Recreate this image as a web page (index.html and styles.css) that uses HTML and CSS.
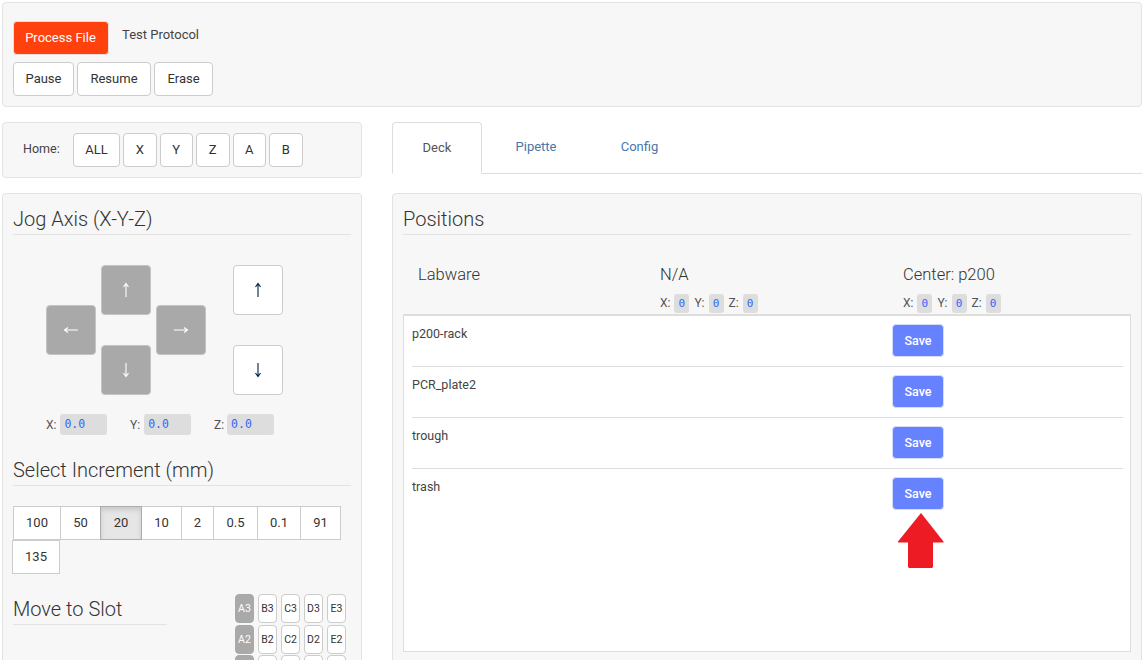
FILE: index.html
```html
<!DOCTYPE html>
<html lang="en">
<head>
  <meta charset="UTF-8">
  <title>Protocol Calibration</title>
  <meta name="viewport" content="width=device-width, initial-scale=1.0">
  <link rel="stylesheet" href="styles.css">
</head>
<body>

  <div class="well top-well">
    <div class="file-row">
      <button class="btn btn-run">Process File</button>
      <span class="file-name">Test Protocol</span>
    </div>
    <div class="btn-row">
      <button class="btn">Pause</button>
      <button class="btn">Resume</button>
      <button class="btn">Erase</button>
    </div>
  </div>

  <div class="columns">
    <div class="left-col">
      <div class="well home-well">
        <span class="home-label">Home:</span>
        <button class="btn home-all">ALL</button>
        <button class="btn home-axis">X</button>
        <button class="btn home-axis">Y</button>
        <button class="btn home-axis">Z</button>
        <button class="btn home-axis">A</button>
        <button class="btn home-axis">B</button>
      </div>

      <div class="well jog-well">
        <h3 class="section-title">Jog Axis (X-Y-Z)</h3>

        <div class="jog-grid">
          <button class="jog jog-dark jog-y-up"><svg width="16" height="16" viewBox="0 0 16 16"><path d="M8 1.500V15M5.500 5 8 1.500 10.500 5"/></svg></button>
          <button class="jog jog-dark jog-x-left"><svg width="16" height="16" viewBox="0 0 16 16"><path d="M1.500 8H15M5 5.500 1.500 8 5 10.500"/></svg></button>
          <button class="jog jog-dark jog-x-right"><svg width="16" height="16" viewBox="0 0 16 16"><path d="M1 8H14.500M11 5.500 14.500 8 11 10.500"/></svg></button>
          <button class="jog jog-dark jog-y-down"><svg width="16" height="16" viewBox="0 0 16 16"><path d="M8 1V14.500M5.500 11 8 14.500 10.500 11"/></svg></button>
          <button class="jog jog-z-up"><svg width="16" height="16" viewBox="0 0 16 16"><path d="M8 1.500V15M5.500 5 8 1.500 10.500 5"/></svg></button>
          <button class="jog jog-z-down"><svg width="16" height="16" viewBox="0 0 16 16"><path d="M8 1V14.500M5.500 11 8 14.500 10.500 11"/></svg></button>
        </div>

        <div class="readout">
          <span class="axis">X: <code class="val">0.0</code></span>
          <span class="axis">Y: <code class="val">0.0</code></span>
          <span class="axis">Z: <code class="val">0.0</code></span>
        </div>

        <h3 class="section-title incr-title">Select Increment (mm)</h3>
        <div class="incr-group">
          <button class="incr w47">100</button>
          <button class="incr w40">50</button>
          <button class="incr w41 active">20</button>
          <button class="incr w40">10</button>
          <button class="incr w32">2</button>
          <button class="incr w44">0.5</button>
          <button class="incr w43">0.1</button>
          <button class="incr w40">91</button>
          <button class="incr w48 wrapped">135</button>
        </div>

        <div class="slot-area">
          <h3 class="section-title slot-title">Move to Slot</h3>
          <div class="slot-grid">
            <button class="slot slot-dark">A3</button>
            <button class="slot">B3</button>
            <button class="slot">C3</button>
            <button class="slot">D3</button>
            <button class="slot">E3</button>
            <button class="slot slot-dark">A2</button>
            <button class="slot">B2</button>
            <button class="slot">C2</button>
            <button class="slot">D2</button>
            <button class="slot">E2</button>
            <button class="slot slot-dark">A1</button>
            <button class="slot">B1</button>
            <button class="slot">C1</button>
            <button class="slot">D1</button>
            <button class="slot">E1</button>
          </div>
        </div>
      </div>
    </div>

    <div class="right-col">
      <ul class="tabs">
        <li class="tab active">Deck</li>
        <li class="tab tab-pipette">Pipette</li>
        <li class="tab tab-config">Config</li>
      </ul>

      <div class="well positions-well">
        <h3 class="section-title">Positions</h3>

        <div class="pos-head">
          <div class="pos-col pos-labware"><span class="pos-name">Labware</span></div>
          <div class="pos-col pos-na">
            <span class="pos-name">N/A</span>
            <div class="pos-coords">
              <span>X: <code class="val-sm">0</code></span>
              <span>Y: <code class="val-sm">0</code></span>
              <span>Z: <code class="val-sm">0</code></span>
            </div>
          </div>
          <div class="pos-col pos-center">
            <span class="pos-name">Center: p200</span>
            <div class="pos-coords">
              <span>X: <code class="val-sm">0</code></span>
              <span>Y: <code class="val-sm">0</code></span>
              <span>Z: <code class="val-sm">0</code></span>
            </div>
          </div>
        </div>

        <div class="pos-box">
          <div class="pos-row">
            <span class="pos-label">p200-rack</span>
            <button class="btn-save">Save</button>
          </div>
          <div class="pos-row">
            <span class="pos-label">PCR_plate2</span>
            <button class="btn-save">Save</button>
          </div>
          <div class="pos-row">
            <span class="pos-label">trough</span>
            <button class="btn-save">Save</button>
          </div>
          <div class="pos-row pos-last">
            <span class="pos-label">trash</span>
            <button class="btn-save">Save</button>
          </div>
          <svg class="red-arrow" width="46" height="55" viewBox="0 0 46 55">
            <path d="M23 0 L45.500 28.500 L45.500 29.500 L35 29.500 L35 54 L34 55 L11 55 L10 54 L10 29.500 L0 29.500 L0 28.500 Z" fill="#ed1c24"/>
          </svg>
        </div>
      </div>
    </div>
  </div>

</body>
</html>
```

FILE: styles.css
```css
* {
  box-sizing: border-box;
}
html, body {
  height: 660px;
  overflow: hidden;
}
body {
  margin: 0;
  padding: 2px 5px 0 2px;
  background-color: #fff;
  color: #333;
  font-family: Roboto, "Liberation Sans", sans-serif;
  font-size: 13px;
}
button {
  font-family: inherit;
  margin: 0;
}
.well {
  background-color: #f7f7f7;
  border: 1px solid #e3e3e3;
  border-radius: 4px;
}
.btn {
  height: 34px;
  padding: 0 12px 2px;
  background-color: #fff;
  border: 1px solid #ccc;
  border-radius: 4px;
  color: #333;
  font-size: 13px;
}
.btn-run {
  width: 96px;
  padding: 0 1px 2px 0;
  background-color: #ff410e;
  border-color: #e6e0dc;
  color: #fff;
}

/* top bar */
.top-well {
  height: 105px;
  padding: 18px 10px 0;
}
.file-row {
  display: flex;
  height: 41px;
}
.file-name {
  margin-left: 13px;
  padding-top: 6px;
  color: #444;
}
.btn-row {
  display: flex;
  gap: 3px;
}
.btn-row .btn {
  padding: 0 0 2px;
}
.btn-row .btn:nth-child(1) { width: 61px; }
.btn-row .btn:nth-child(2) { width: 74px; }
.btn-row .btn:nth-child(3) { width: 59px; }

/* columns */
.columns {
  display: flex;
  gap: 30px;
  margin-top: 15px;
}
.left-col {
  width: 360px;
  flex: none;
}
.right-col {
  flex: 1;
  min-width: 0;
}

/* home */
.home-well {
  display: flex;
  align-items: center;
  height: 56px;
  padding-left: 20px;
}
.home-label {
  width: 50px;
  padding-bottom: 4px;
  color: #444;
  font-size: 12.500px;
}
.home-well .btn {
  padding: 0 0 2px;
  margin-right: 3px;
}
.home-all { width: 47px; }
.home-well .home-axis { width: 33.500px; }

/* jog */
.jog-well {
  height: 520px;
  margin-top: 15px;
  padding: 0 10px;
}
.section-title {
  margin: 0;
  padding-top: 13px;
  height: 41px;
  border-bottom: 1px solid #e3e3e3;
  color: #333;
  font-size: 20px;
  font-weight: 300;
  line-height: 24px;
}
.jog-grid {
  display: grid;
  grid-template-columns: 50px 5px 50px 5px 50px 27px 50px;
  grid-template-rows: 40px 10px 30px 10px 40px;
  margin: 30px 0 0 33px;
}
.jog {
  display: flex;
  align-items: center;
  justify-content: center;
  padding: 0;
  background-color: #fff;
  border: 1px solid #ccc;
  border-radius: 4px;
}
.jog svg {
  fill: none;
  stroke: #024;
  stroke-width: 1.100;
}
.jog-dark {
  background-color: #a9a9a9;
  border-color: #c4c4c4;
}
.jog-dark svg {
  stroke: #fff;
}
.jog-y-up { grid-column: 3; grid-row: 1 / 3; }
.jog-x-left { grid-column: 1; grid-row: 2 / 5; }
.jog-x-right { grid-column: 5; grid-row: 2 / 5; }
.jog-y-down { grid-column: 3; grid-row: 4 / 6; }
.jog-z-up { grid-column: 7; grid-row: 1 / 3; }
.jog-z-down { grid-column: 7; grid-row: 4 / 6; }

.readout {
  display: flex;
  margin: 19px 0 0 33px;
  color: #555;
  font-size: 12px;
}
.axis {
  width: 84px;
  display: flex;
  align-items: center;
  gap: 4px;
}
.axis:last-child {
  gap: 3px;
}
.val {
  display: block;
  width: 47px;
  height: 21px;
  padding-left: 4px;
  background-color: #ddd;
  border-radius: 3px;
  color: #36f;
  font-family: "DejaVu Sans Mono", monospace;
  font-size: 11.500px;
  line-height: 21px;
}
.incr-title {
  margin-top: 10px;
}
.incr-group {
  display: flex;
  flex-wrap: wrap;
  margin-top: 20px;
}
.incr {
  height: 34px;
  padding: 0 0 2px;
  background-color: #fff;
  border: 1px solid #ccc;
  margin-right: -1px;
  color: #333;
  font-size: 13px;
}
.incr.active {
  background-color: #e6e6e6;
  border-color: #adadad;
  box-shadow: inset 0 3px 5px rgba(0, 0, 0, .125);
  position: relative;
}
.w32 { width: 33px; }
.w40 { width: 41px; }
.w41 { width: 42px; }
.w43 { width: 44px; }
.w44 { width: 45px; }
.w47 { width: 48px; }
.w48 { width: 48px; }
.wrapped {
  margin: 0 0 0 -1px;
}

.slot-area {
  display: flex;
  margin-top: 20px;
}
.slot-title {
  width: 154px;
  height: 31px;
  margin-top: 0;
  padding-top: 3px;
}
.slot-grid {
  display: grid;
  grid-template-columns: repeat(5, 19px);
  grid-auto-rows: 29px;
  column-gap: 4px;
  row-gap: 1.500px;
  margin-left: 68px;
}
.slot {
  padding: 0;
  background-color: #fff;
  border: 1px solid #ccc;
  border-radius: 4px;
  color: #333;
  font-size: 10.500px;
}
.slot-dark {
  background-color: #a9a9a9;
  border-color: #a9a9a9;
  color: #fff;
}

/* tabs */
.tabs {
  display: flex;
  height: 52px;
  margin: 0;
  padding: 0;
  list-style: none;
  border-bottom: 1px solid #ddd;
}
.tab {
  width: 90px;
  height: 52px;
  padding-top: 17px;
  text-align: center;
  color: #4a76a8;
}
.tab.active {
  border: 1px solid #ddd;
  border-bottom-color: #fff;
  border-radius: 4px 4px 0 0;
  color: #555;
}
.tab-pipette { width: 108px; }
.tab-config { width: 99px; }

/* positions */
.positions-well {
  height: 520px;
  margin-top: 19px;
  padding: 0 10px;
}
.pos-head {
  display: flex;
  height: 79px;
  padding-top: 30px;
}
.pos-col {
  display: flex;
  flex-direction: column;
}
.pos-labware { width: 257px; padding-left: 15px; }
.pos-na { width: 243px; }
.pos-name {
  height: 21px;
  color: #333;
  font-size: 16.500px;
  font-weight: 300;
  line-height: 20px;
}
.pos-coords {
  display: flex;
  gap: 5px;
  margin-top: 8px;
  color: #555;
  font-size: 12px;
}
.val-sm {
  display: inline-block;
  width: 15px;
  height: 19px;
  margin-left: 1px;
  background-color: #ddd;
  border-radius: 3px;
  color: #36f;
  font-family: "DejaVu Sans Mono", monospace;
  font-size: 11px;
  line-height: 19px;
  text-align: center;
}
.pos-box {
  position: relative;
  height: 338px;
  padding: 0 7px 0 8px;
  background-color: #fff;
  border: 1px solid #ddd;
  border-top-width: 2px;
}
.pos-row {
  display: flex;
  height: 51px;
  border-bottom: 1px solid #ddd;
  padding-top: 8px;
}
.pos-last {
  border-bottom: none;
}
.pos-label {
  width: 480px;
  padding-top: 2px;
  color: #444;
  font-size: 12.500px;
}
.btn-save {
  width: 52px;
  height: 33px;
  padding: 0;
  background-color: #6682ff;
  border: 1px solid #d5dcf5;
  border-radius: 4px;
  color: #fff;
  font-size: 12.500px;
  font-weight: 500;
}
.red-arrow {
  position: absolute;
  left: 494px;
  top: 197px;
}
```
